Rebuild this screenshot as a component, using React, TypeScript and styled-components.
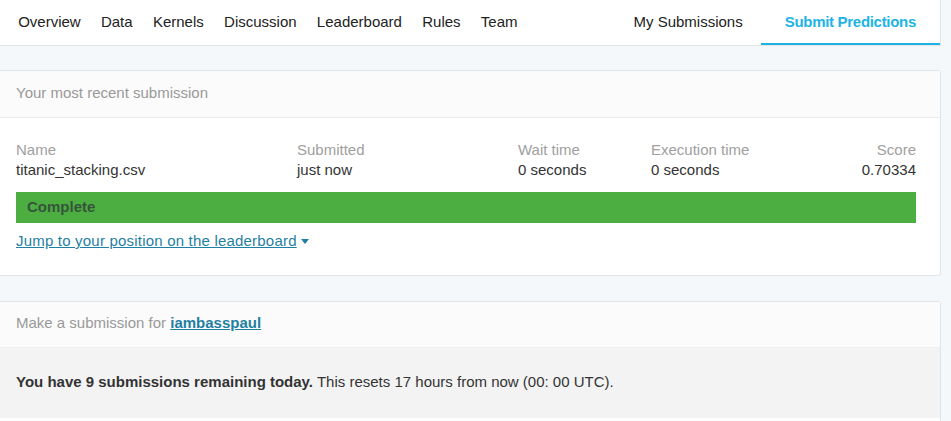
import React from "react";
import styled, { createGlobalStyle } from "styled-components";

const Global = createGlobalStyle`
  html, body { margin: 0; padding: 0; background: #f5f8fa; }
  body { font-family: "Liberation Sans", Arial, sans-serif; color: #333; }
  * { box-sizing: border-box; }
`;

const Page = styled.div`
  width: 941px;
`;

const Nav = styled.nav`
  display: flex;
  align-items: stretch;
  height: 46px;
  background: #fff;
  border-bottom: 1px solid #e1e4e6;
  border-right: 1px solid #e1e4e6;
  padding-left: 8px;
`;

const Tab = styled.a<{ $active?: boolean; $pad?: number; $padRight?: number }>`
  display: block;
  height: 45px;
  padding: 12px ${(p) => p.$padRight ?? p.$pad ?? 10.15}px 0 ${(p) => p.$pad ?? 10.15}px;
  font-size: 15px;
  line-height: 20px;
  color: ${(p) => (p.$active ? "#20b4e6" : "#222")};
  font-weight: ${(p) => (p.$active ? "bold" : "normal")};
  letter-spacing: ${(p) => (p.$active ? "-0.3px" : "0")};
  border-bottom: 2px solid ${(p) => (p.$active ? "#20b4e6" : "transparent")};
  white-space: nowrap;
  text-decoration: none;
`;

const Spacer = styled.div`
  flex: 1;
`;

const Card = styled.section<{ $gap?: number }>`
  margin-top: ${(p) => p.$gap ?? 24}px;
  background: #fff;
  border: 1px solid #e1e4e6;
  border-left: none;
  border-radius: 0 3px 3px 0;
`;

const CardHeader = styled.header`
  height: 47px;
  padding: 12px 16px 0;
  background: #fbfbfb;
  border-bottom: 1px solid #ececec;
  font-size: 15px;
  line-height: 20px;
  color: #999;
`;

const CardBody = styled.div`
  padding: 22px 24px 24px 16px;
`;

const Stats = styled.div`
  display: grid;
  grid-template-columns: 281px 221px 133px 1fr auto;
  font-size: 15px;
  line-height: 20px;
`;

const Stat = styled.div<{ $right?: boolean }>`
  display: flex;
  flex-direction: column;
  text-align: ${(p) => (p.$right ? "right" : "left")};
`;

const Label = styled.span`
  color: #a0a0a0;
`;

const Value = styled.span`
  color: #333;
`;

const StatusBar = styled.div`
  margin-top: 12px;
  height: 31px;
  background: #4cae40;
  padding: 6px 11px 0;
  font-size: 15px;
  line-height: 18px;
  font-weight: bold;
  color: #35553a;
`;

const JumpLink = styled.a`
  display: inline-flex;
  align-items: center;
  gap: 4px;
  margin-top: 8px;
  font-size: 15px;
  line-height: 20px;
  letter-spacing: 0.2px;
  color: #1f7fa3;
  text-decoration: underline;
  cursor: pointer;
`;

const Caret = styled.span`
  display: inline-block;
  width: 0;
  height: 0;
  border-left: 4px solid transparent;
  border-right: 4px solid transparent;
  border-top: 5px solid #1f7fa3;
  margin-top: 1px;
`;

const UserLink = styled.a`
  color: #1f7fa3;
  font-weight: bold;
  text-decoration: underline;
`;

const Notice = styled.div`
  height: 70px;
  background: #f3f3f3;
  padding: 24px 16px 0;
  font-size: 15px;
  line-height: 20px;
  color: #333;
`;

const Strong = styled.strong`
  font-weight: bold;
`;

const Filler = styled.div`
  height: 20px;
  background: #fff;
`;

const Card2Header = styled(CardHeader)`
  height: 46px;
  padding-top: 11px;
  border-bottom: 1px solid #f0f0f0;
`;

export default function App() {
  const leftTabs = ["Overview", "Data", "Kernels", "Discussion", "Leaderboard", "Rules", "Team"];
  return (
    <Page>
      <Global />
      <Nav>
        {leftTabs.map((t) => (
          <Tab key={t}>{t}</Tab>
        ))}
        <Spacer />
        <Tab $pad={12} $padRight={18}>My Submissions</Tab>
        <Tab $active $pad={24}>Submit Predictions</Tab>
      </Nav>

      <Card>
        <CardHeader>Your most recent submission</CardHeader>
        <CardBody>
          <Stats>
            <Stat>
              <Label>Name</Label>
              <Value>titanic_stacking.csv</Value>
            </Stat>
            <Stat>
              <Label>Submitted</Label>
              <Value>just now</Value>
            </Stat>
            <Stat>
              <Label>Wait time</Label>
              <Value>0 seconds</Value>
            </Stat>
            <Stat>
              <Label>Execution time</Label>
              <Value>0 seconds</Value>
            </Stat>
            <Stat $right>
              <Label>Score</Label>
              <Value>0.70334</Value>
            </Stat>
          </Stats>
          <StatusBar>Complete</StatusBar>
          <JumpLink>
            Jump to your position on the leaderboard <Caret />
          </JumpLink>
        </CardBody>
      </Card>

      <Card $gap={25}>
        <Card2Header>
          Make a submission for <UserLink>iambasspaul</UserLink>
        </Card2Header>
        <Notice>
          <Strong>You have 9 submissions remaining today.</Strong> This resets 17 hours from now (00: 00 UTC).
        </Notice>
        <Filler />
      </Card>
    </Page>
  );
}
